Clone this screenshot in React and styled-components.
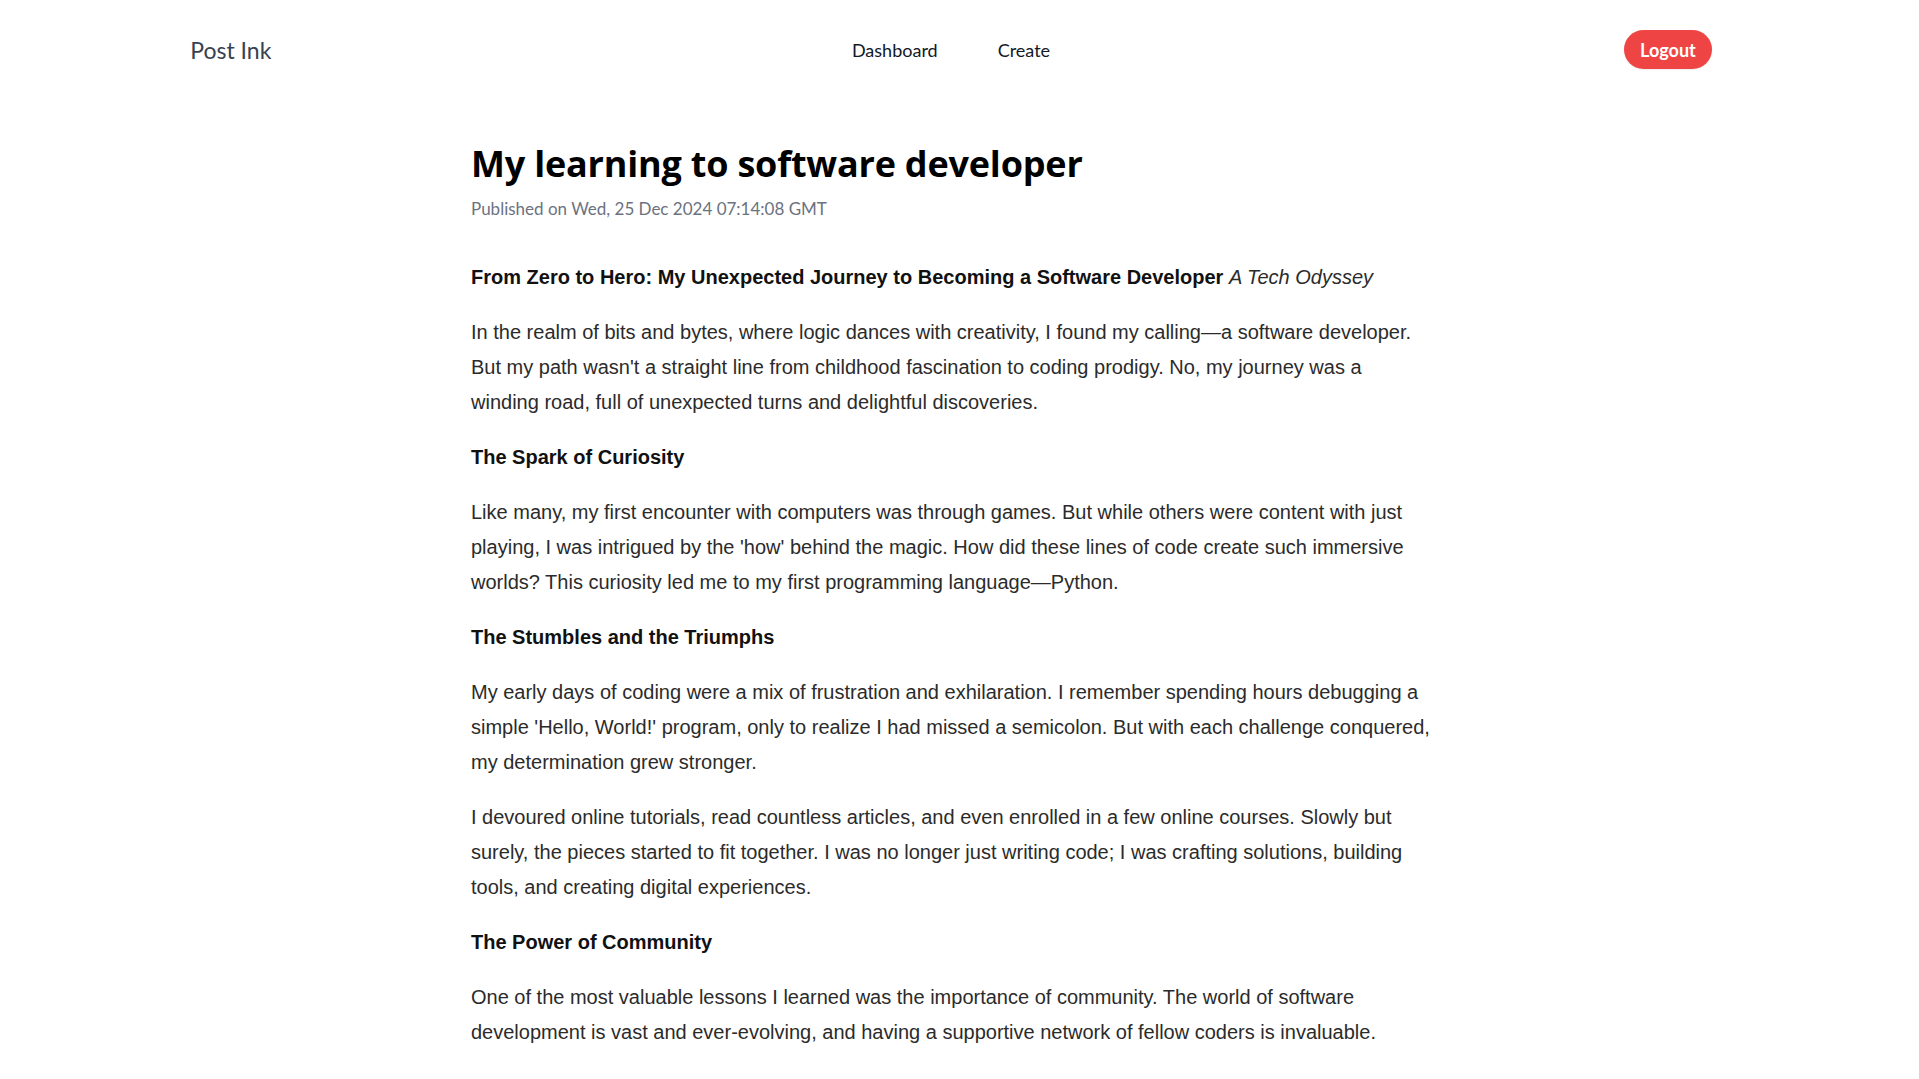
import styled, { createGlobalStyle } from "styled-components";

const GlobalStyle = createGlobalStyle`
  html, body {
    margin: 0;
    padding: 0;
    background: #ffffff;
  }
  body {
    font-family: "Lato", "Noto Sans", sans-serif;
    color: #111827;
  }
`;

// the reference leaves a 17px strip on the right for the browser scrollbar
const Page = styled.div`
  width: calc(100% - 17px);
`;

const Header = styled.header`
  width: 80%;
  margin: 0 auto;
  padding-top: 30px;
  display: grid;
  grid-template-columns: 1fr auto 1fr;
  align-items: center;
`;

const Logo = styled.a`
  justify-self: start;
  font-size: 23px;
  color: #374151;
  text-decoration: none;
  cursor: pointer;
`;

const Nav = styled.nav`
  display: flex;
  gap: 60px;
`;

const NavLink = styled.a`
  font-size: 18px;
  color: #111827;
  text-decoration: none;
  cursor: pointer;
`;

const LogoutButton = styled.button`
  justify-self: end;
  height: 39px;
  padding: 0 16px;
  border: none;
  border-radius: 999px;
  background-color: #ef4444;
  color: #ffffff;
  font-family: "Lato", "Noto Sans", sans-serif;
  font-size: 18px;
  font-weight: 700;
  box-shadow: 0 1px 2px rgba(0, 0, 0, 0.08);
  cursor: pointer;
`;

const Article = styled.main`
  max-width: 960px;
  margin: 75px auto 0;
  padding-bottom: 60px;
`;

const Title = styled.h1`
  margin: 0;
  font-family: "Open Sans", "Noto Sans", sans-serif;
  font-size: 36px;
  line-height: 40px;
  font-weight: 700;
  letter-spacing: -0.2px;
  color: #000000;
`;

const Published = styled.p`
  margin: 11px 0 0;
  font-size: 17px;
  line-height: 28px;
  color: #6b7280;
`;

const Body = styled.div`
  margin-top: 37px;
  font-family: "Liberation Sans", Arial, sans-serif;
  font-size: 20px;
  line-height: 35px;
  color: #2b2b2b;

  p {
    margin: 0 0 20px;
  }

  strong {
    color: #111111;
  }
`;

const content = [
  { type: "lead" },
  {
    text: "In the realm of bits and bytes, where logic dances with creativity, I found my calling\u2014a software developer. But my path wasn't a straight line from childhood fascination to coding prodigy. No, my journey was a winding road, full of unexpected turns and delightful discoveries.",
  },
  { heading: "The Spark of Curiosity" },
  {
    text: "Like many, my first encounter with computers was through games. But while others were content with just playing, I was intrigued by the 'how' behind the magic. How did these lines of code create such immersive worlds? This curiosity led me to my first programming language\u2014Python.",
  },
  { heading: "The Stumbles and the Triumphs" },
  {
    text: "My early days of coding were a mix of frustration and exhilaration. I remember spending hours debugging a simple 'Hello, World!' program, only to realize I had missed a semicolon. But with each challenge conquered, my determination grew stronger.",
  },
  {
    text: "I devoured online tutorials, read countless articles, and even enrolled in a few online courses. Slowly but surely, the pieces started to fit together. I was no longer just writing code; I was crafting solutions, building tools, and creating digital experiences.",
  },
  { heading: "The Power of Community" },
  {
    text: "One of the most valuable lessons I learned was the importance of community. The world of software development is vast and ever-evolving, and having a supportive network of fellow coders is invaluable.",
  },
  {
    text: "I joined online forums, attended local meetups, and participated in hackathons. These experiences not only helped me learn new skills but also introduced me to incredible people who shared my passion for technology.",
  },
  { heading: "The First Real Project" },
  {
    text: "My first real project was a small web application for a local bakery. It was simple, but seeing people actually use something I had built was an incredible feeling. That moment taught me that code is not just about logic; it is about people.",
  },
  {
    text: "Along the way, I learned about version control, testing, and the art of reading other people's code. Every bug fixed and every feature shipped added another piece to the puzzle.",
  },
  { heading: "Lessons Learned" },
  {
    text: "Looking back, the biggest lesson was patience. Learning to code is a marathon, not a sprint. There will be days when nothing works, and days when everything clicks. Both are part of the journey.",
  },
  {
    text: "Stay curious, ask questions, and never be afraid to break things. Mistakes are simply lessons in disguise, and every expert was once a beginner.",
  },
  { heading: "The Road Ahead" },
  {
    text: "Today, I continue to learn something new every day. Technology never stands still, and neither do I. The journey from zero to hero is far from over\u2014in many ways, it has only just begun.",
  },
];

function Block({ block }) {
  if (block.type === "lead") {
    return (
      <p>
        <strong>From Zero to Hero: My Unexpected Journey to Becoming a Software Developer</strong>{" "}
        <em>A Tech Odyssey</em>
      </p>
    );
  }
  if (block.heading) {
    return (
      <p>
        <strong>{block.heading}</strong>
      </p>
    );
  }
  return <p>{block.text}</p>;
}

export default function App() {
  return (
    <Page>
      <GlobalStyle />
      <Header>
        <Logo>Post Ink</Logo>
        <Nav>
          <NavLink>Dashboard</NavLink>
          <NavLink>Create</NavLink>
        </Nav>
        <LogoutButton>Logout</LogoutButton>
      </Header>
      <Article>
        <Title>My learning to software developer</Title>
        <Published>Published on Wed, 25 Dec 2024 07:14:08 GMT</Published>
        <Body>
          {content.map((block, i) => (
            <Block key={i} block={block} />
          ))}
        </Body>
      </Article>
    </Page>
  );
}
